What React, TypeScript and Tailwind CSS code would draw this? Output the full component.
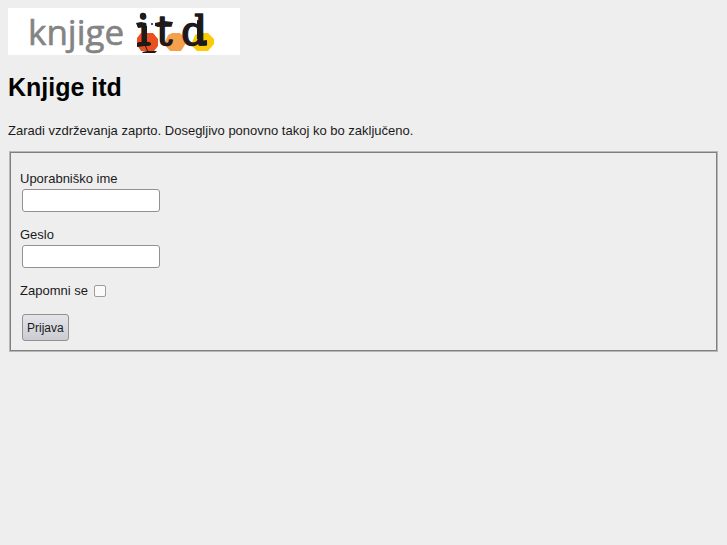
import { useState } from "react";
import type { FormEvent } from "react";

const Logo = () => (
  <svg
    className="block"
    width="232"
    height="47"
    viewBox="0 0 232 47"
    role="img"
    aria-label="knjige itd"
  >
    <rect width="232" height="47" fill="#fff" />
    <path d="M133 25h12l5 6v7l-4 5h-13l-4-6v-7z" fill="#e8501f" />
    <path d="M160 27l4-2h8l5 5 1 5-5 8h-11l-6-7z" fill="#f5a04c" />
    <path d="M187 27l5-2h8l6 6v5l-6 7h-11l-6-6z" fill="#fbcb0b" />
    <text
      x="20"
      y="37"
      fill="#848484"
      stroke="#848484"
      strokeWidth="0.6"
      className="font-['Open_Sans',sans-serif] text-[35px] font-medium"
    >
      knjige
    </text>
    <g
      fill="#1f1a1a"
      stroke="#1f1a1a"
      strokeLinejoin="round"
      strokeWidth="1.4"
      className="font-['DejaVu_Serif',serif] text-[41px]"
    >
      <text x="129 148 173" y="37">
        itd
      </text>
    </g>
    {/* ink blots and drips around the letters */}
    <g fill="#1f1a1a">
      <circle cx="135" cy="8" r="3.2" />
      <path d="M128 15l5-1 5 1v4l-8 1z" />
      <path d="M134 18h5v16h-5z" />
      <path d="M129 35l8-2 6 2v2l-5 1 2 5h9l-2 2h-12l-1-1 5-1-2-5-8 1z" />
      <path d="M147 15l9-2 9 1-1 3-10 2-7-1z" />
      <path d="M152 16h4v18h-4z" />
      <path d="M189 12l5 1v20l-5-2zM191 33l8-1v5l-7 1z" />
      <circle cx="144" cy="16" r="1" />
    </g>
  </svg>
);

interface FieldProps {
  id: string;
  label: string;
  type: string;
  value: string;
  onChange: (value: string) => void;
}

const Field = ({ id, label, type, value, onChange }: FieldProps) => (
  <div className="flex flex-col items-start">
    <label htmlFor={id} className="leading-5">
      {label}
    </label>
    <input
      id={id}
      type={type}
      value={value}
      onChange={(e) => onChange(e.target.value)}
      className="ml-0.5 h-[23px] w-[138px] rounded-[3px] border border-[#949090] bg-white px-1"
    />
  </div>
);

const App = () => {
  const [username, setUsername] = useState("");
  const [password, setPassword] = useState("");
  const [remember, setRemember] = useState(false);

  const onSubmit = (e: FormEvent) => {
    e.preventDefault();
    setPassword("");
  };

  return (
    <div className="min-h-screen bg-[#eee] p-2 font-['Liberation_Sans',Arial,sans-serif] text-[13px] text-[#1a1a1a]">
      <Logo />
      <h1 className="mt-4 text-[25px] font-bold leading-8 text-black">
        Knjige itd
      </h1>
      <p className="mt-[18px] leading-5">
        Zaradi vzdrževanja zaprto. Dosegljivo ponovno takoj ko bo zaključeno.
      </p>
      <form onSubmit={onSubmit}>
        <fieldset className="mx-px mt-[10px] border border-[#b8b8b8]">
          <div className="flex flex-col items-start gap-[13px] border border-[#808080] px-[9px] pt-4 pb-[9px]">
            <Field
              id="username"
              label="Uporabniško ime"
              type="text"
              value={username}
              onChange={setUsername}
            />
            <Field
              id="password"
              label="Geslo"
              type="password"
              value={password}
              onChange={setPassword}
            />
            <div className="flex items-center gap-1.5">
              <label htmlFor="remember" className="leading-5">
                Zapomni se
              </label>
              <input
                id="remember"
                type="checkbox"
                checked={remember}
                onChange={(e) => setRemember(e.target.checked)}
                className="size-3 appearance-none rounded-[2px] border border-[#a09c9c] bg-[#fafafa] checked:bg-[#555]"
              />
            </div>
            <button
              type="submit"
              className="ml-0.5 h-[27px] rounded-[3px] border border-[#949090] bg-linear-to-b from-[#e4e5ea] to-[#cbccd3] px-1 text-[12px]"
            >
              Prijava
            </button>
          </div>
        </fieldset>
      </form>
    </div>
  );
};

export default App;
